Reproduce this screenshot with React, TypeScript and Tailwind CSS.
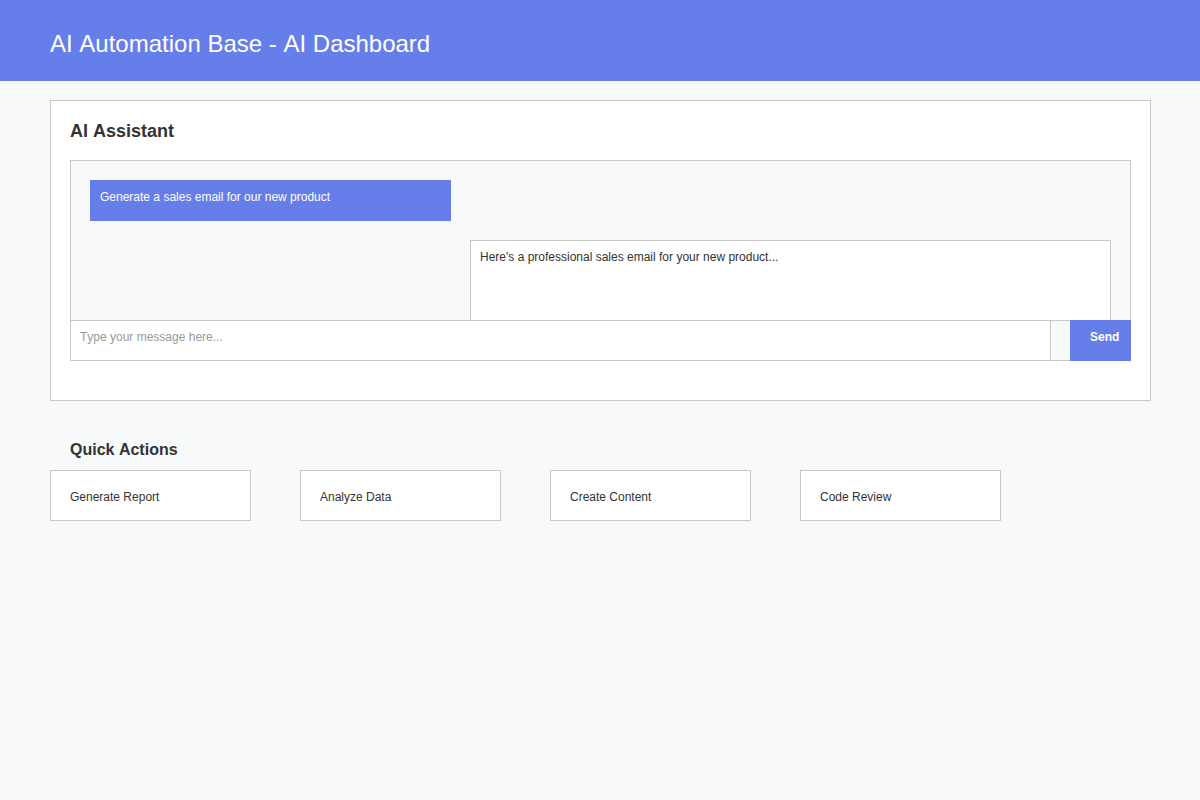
const quickActions = ["Generate Report", "Analyze Data", "Create Content", "Code Review"];

function Header() {
  return (
    <header className="bg-[#667eea] px-[50px] pt-7 pb-[21px]">
      <h1 className="text-2xl leading-8 text-white">AI Automation Base - AI Dashboard</h1>
    </header>
  );
}

function Assistant() {
  return (
    <section
      aria-labelledby="assistant-title"
      className="border border-[#c8c8c8] bg-white px-[19px] pt-4 pb-[39px]"
    >
      <h2 id="assistant-title" className="mb-[15px] text-lg leading-7 font-bold">
        AI Assistant
      </h2>
      <div className="flex flex-col gap-[19px] border-x border-t border-[#c8c8c8] bg-[#f8f9fb] px-[19px] pt-[19px]">
        <p className="w-[361px] max-w-full bg-[#667eea] px-2.5 pt-[9px] pb-4 text-white">
          Generate a sales email for our new product
        </p>
        <p className="min-h-20 w-[641px] max-w-full self-end border-x border-t border-[#c8c8c8] bg-white px-[9px] pt-2">
          Here&apos;s a professional sales email for your new product...
        </p>
      </div>
      <form
        className="flex border-y border-l border-[#c8c8c8] bg-[#f8f9fb]"
        onSubmit={(event) => event.preventDefault()}
      >
        <input
          type="text"
          aria-label="Message"
          placeholder="Type your message here..."
          className="mr-[19px] min-w-0 flex-1 border-r border-[#c8c8c8] bg-white px-[9px] pt-2 pb-[15px] text-xs leading-4 placeholder:text-[#999999] placeholder:opacity-100"
        />
        <button
          type="submit"
          className="-my-px w-[61px] bg-[#667eea] pt-[9px] pb-4 pl-5 text-left font-bold text-white"
        >
          Send
        </button>
      </form>
    </section>
  );
}

function QuickActions() {
  return (
    <section aria-labelledby="actions-title" className="mt-[37px]">
      <h2 id="actions-title" className="mb-2 pl-5 text-base leading-6 font-bold">
        Quick Actions
      </h2>
      <div className="flex flex-wrap gap-[49px]">
        {quickActions.map((action) => (
          <button
            key={action}
            type="button"
            className="w-[201px] border border-[#c8c8c8] bg-white px-[19px] pt-[18px] pb-[15px] text-left"
          >
            {action}
          </button>
        ))}
      </div>
    </section>
  );
}

export default function App() {
  return (
    <div className="min-h-screen bg-[#f8f9fb] font-['Liberation_Sans',Arial,sans-serif] text-xs leading-4 text-[#333333] [font-kerning:none]">
      <Header />
      <main className="pt-[19px] pr-[49px] pb-10 pl-[50px]">
        <Assistant />
        <QuickActions />
      </main>
    </div>
  );
}
